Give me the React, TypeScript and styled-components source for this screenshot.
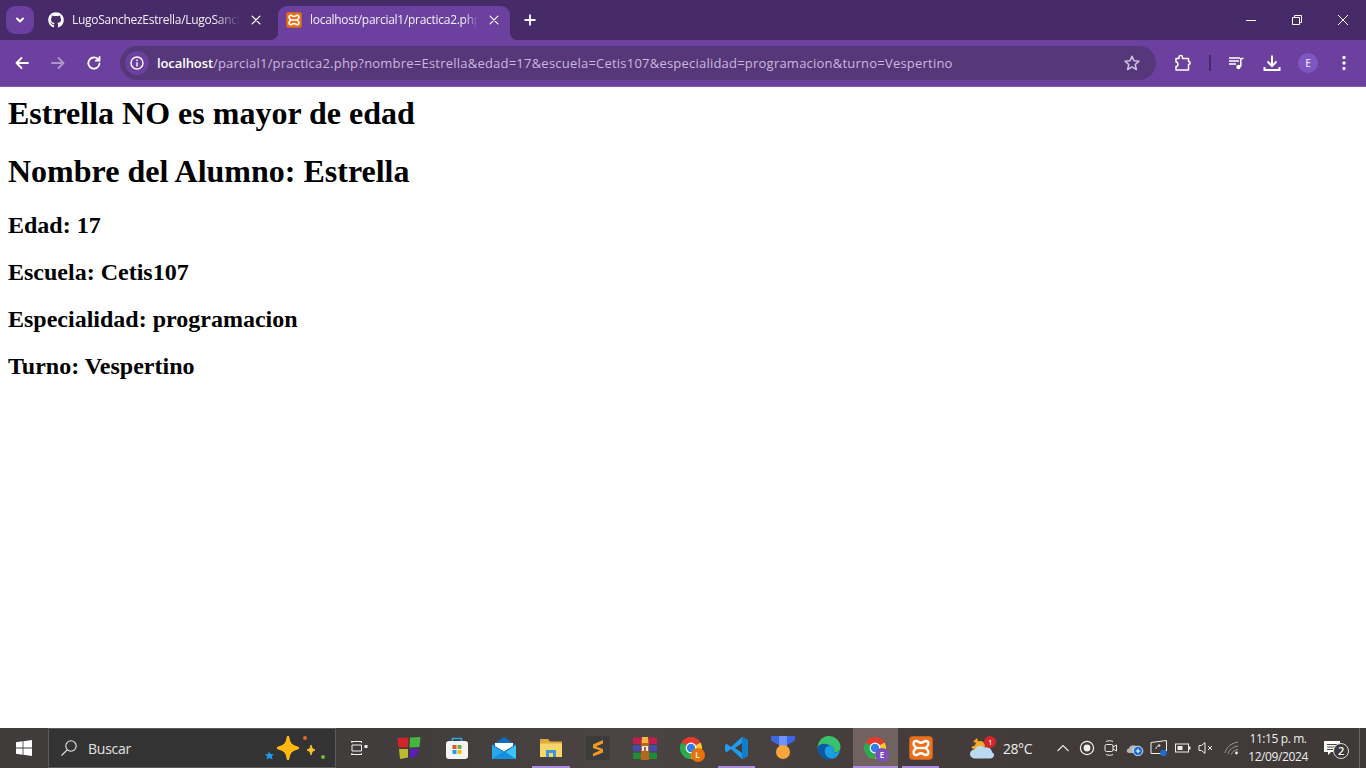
import React from "react";
import styled, { createGlobalStyle } from "styled-components";
import { FaGithub } from "react-icons/fa";

const Global = createGlobalStyle`
  html, body { margin: 0; padding: 0; height: 100%; background: #fff; overflow: hidden; }
  #root { height: 100%; }
`;

const Page = styled.div`
  width: 1366px; height: 768px; display: flex; flex-direction: column; overflow: hidden;
  font-family: "Open Sans", "Noto Sans", sans-serif;
`;

/* ---------- browser chrome ---------- */
const TabStrip = styled.div`
  height: 40px; flex: none; background: #462b68; display: flex; align-items: flex-end; color: #fff;
`;
const TabSearch = styled.button`
  width: 28px; height: 28px; margin: 0 6px 6px 6px; padding: 0; border: 0; border-radius: 9px;
  background: #6a3f9e; display: flex; align-items: center; justify-content: center;
`;
const Tab = styled.div<{ $active?: boolean }>`
  position: relative; height: 34px; display: flex; align-items: center; box-sizing: border-box;
  width: ${p => (p.$active ? 232 : 238)}px; padding: 0 ${p => (p.$active ? 8 : 14)}px 6px 8px;
  border-radius: 9px 9px 0 0; background: ${p => (p.$active ? "#6c409f" : "transparent")};
  ${p => p.$active && `
    &::before, &::after { content: ""; position: absolute; bottom: 0; width: 8px; height: 8px; }
    &::before { left: -8px; background: radial-gradient(circle at 0 0, transparent 8px, #6c409f 8.5px); }
    &::after { right: -8px; background: radial-gradient(circle at 100% 0, transparent 8px, #6c409f 8.5px); }
  `}
`;
const TabIcon = styled.span`
  width: 16px; height: 16px; flex: none; display: flex; margin-right: 8px; font-size: 16px;
`;
const TabTitle = styled.span<{ $fade: string }>`
  flex: 1; min-width: 0; font-size: 12px; line-height: 16px; white-space: nowrap; overflow: hidden; color: #f3eefa;
  letter-spacing: -0.28px;
  -webkit-mask-image: linear-gradient(to right, #000 ${p => p.$fade}, transparent 100%);
  mask-image: linear-gradient(to right, #000 ${p => p.$fade}, transparent 100%);
`;
const TabClose = styled.span`
  flex: none; width: 16px; height: 16px; margin-left: 8px; display: flex; align-items: center; justify-content: center;
`;
const NewTab = styled.span`
  width: 16px; height: 16px; margin: 0 0 12px 12px; display: flex;
`;
const Spacer = styled.div`flex: 1;`;
const WindowButton = styled.span`
  width: 46px; height: 40px; display: flex; align-items: center; justify-content: center;
`;

const Toolbar = styled.div`
  height: 47px; flex: none; box-sizing: border-box; background: #6c409f; border-bottom: 1px solid #8458b5;
  display: flex; align-items: center; padding: 0 0 1px 4px; color: #fff;
`;
const ToolButton = styled.span<{ $w?: number; $dim?: boolean }>`
  width: ${p => p.$w ?? 36}px; height: 34px; flex: none; display: flex; align-items: center; justify-content: center;
  opacity: ${p => (p.$dim ? 0.45 : 1)};
`;
const Omnibox = styled.div`
  width: 1036px; height: 34px; margin: 0 9px 0 8px; flex: none; border-radius: 17px; background: #56377a;
  display: flex; align-items: center; box-sizing: border-box; padding: 0 15px 0 5px;
`;
const InfoChip = styled.span`
  width: 24px; height: 24px; border-radius: 50%; background: #6c409f; flex: none; display: flex; align-items: center; justify-content: center;
  margin-right: 8px;
`;
const Url = styled.div`
  flex: 1; font-size: 13px; line-height: 18px; color: #c9b9dd; white-space: nowrap; letter-spacing: 0.22px;
`;
const UrlHost = styled.span`color: #fff; font-weight: 600; letter-spacing: -0.1px;`;
const Separator = styled.span`
  width: 2px; height: 16px; background: #462b68; flex: none; margin: 0 7px 0 8px;
`;
const Avatar = styled.span`
  width: 20px; height: 20px; border-radius: 50%; background: #7e56c2; color: #e6dcf5; font-size: 10px; font-weight: 600;
  display: flex; align-items: center; justify-content: center;
`;

/* ---------- document ---------- */
const Content = styled.main`
  flex: 1; min-height: 0; background: #fff; color: #000; padding: 8px; font-family: "Liberation Serif", "Times New Roman", serif;
`;
const Title = styled.h1`
  font-size: 32px; font-weight: 700; margin: 0 0 21.44px;
`;
const Detail = styled.h2`
  font-size: 24px; font-weight: 700; margin: 19.92px 0;
`;

/* ---------- taskbar ---------- */
const Taskbar = styled.footer`
  height: 40px; flex: none; display: flex; align-items: stretch; color: #fff;
  background: linear-gradient(90deg, #403c3c 0%, #403d3c 30%, #4a4442 45%, #453d3b 65%, #423a38 80%, #3e3a38 100%);
`;
const StartButton = styled.span`
  width: 48px; flex: none; display: flex; align-items: center; justify-content: center;
`;
const SearchBox = styled.div`
  width: 288px; flex: none; box-sizing: border-box; background: #333333; border: 1px solid #5d5a59;
  display: flex; align-items: center; padding: 0 8px 0 11px; font-size: 14px; color: #e4e4e4;
`;
const SearchText = styled.span`
  flex: 1; margin-left: 10px; font-size: 14px; letter-spacing: -0.25px;
`;
const TaskView = styled.span`
  width: 48px; flex: none; display: flex; align-items: center; justify-content: center;
`;
const TaskItem = styled.span<{ $ml: number; $bar: number; $on?: boolean }>`
  position: relative; width: 45px; flex: none; margin-left: ${p => p.$ml}px; display: flex; align-items: center; justify-content: center;
  background: ${p => (p.$on ? "#6f625f" : "transparent")};
  ${p => p.$bar > 0 && `
    &::after { content: ""; position: absolute; left: 50%; bottom: 0; width: ${p.$bar}px; height: 2px; margin-left: -${p.$bar / 2}px; background: #ab8ae0; }
  `}
`;
const IconWrap = styled.span<{ $w?: number }>`
  position: relative; display: flex; width: ${p => p.$w ?? 24}px; height: 24px;
`;
const Badge = styled.span<{ $bg: string }>`
  position: absolute; right: -2px; bottom: -2px; width: 14px; height: 14px; border-radius: 50%; background: ${p => p.$bg};
  color: #fff; font-size: 8px; line-height: 14px; text-align: center; font-weight: 600;
`;
const WeatherBadge = styled.span`
  position: absolute; right: 0; top: 0; width: 12px; height: 12px; border-radius: 50%; background: #d5262c;
  color: #fff; font-size: 8px; line-height: 12px; text-align: center;
`;
const Weather = styled.div`
  margin-left: 27px; flex: none; display: flex; align-items: center; font-size: 14px; color: #eee; letter-spacing: -0.45px;
`;
const WeatherText = styled.span`margin-left: 7px;`;
const Tray = styled.div`
  margin-left: 19px; flex: none; display: flex; align-items: center;
`;
const TrayItem = styled.span<{ $w?: number }>`
  width: ${p => p.$w ?? 24}px; flex: none; display: flex; align-items: center; justify-content: center;
`;
const Clock = styled.div`
  width: 62px; flex: none; display: flex; flex-direction: column; align-items: center; justify-content: center;
  font-size: 12px; line-height: 18px; color: #eee; letter-spacing: -0.4px;
`;
const Notify = styled.span`
  position: relative; width: 46px; flex: none; display: flex; align-items: center; justify-content: center;
`;
const NotifyCount = styled.span`
  position: absolute; left: 24px; top: 15px; width: 16px; height: 16px; box-sizing: border-box; border-radius: 50%; background: #3a3a3a;
  border: 1px solid #ddd; color: #fff; font-size: 11px; line-height: 14px; text-align: center; font-weight: 600;
`;
const ShowDesktop = styled.span`
  width: 1px; margin-left: 4px; background: #6b6663; flex: none;
`;

/* ---------- drawings ---------- */
const Xampp = ({ size }: { size: number }) => (
  <svg width={size} height={size} viewBox="0 0 24 24">
    <rect x="0.5" y="0.5" width="23" height="23" rx="3" fill="#e8701f" stroke="#c75f1c" />
    <path d="M7.2 5C9 5 10 6.8 12 6.8S15 5 16.8 5C19.8 5 20.2 8.4 18.4 10.2 17.8 10.9 17.2 11.3 17.2 12S17.8 13.1 18.4 13.8C20.2 15.6 19.8 19 16.8 19 15 19 14 17.2 12 17.2S9 19 7.2 19C4.2 19 3.8 15.6 5.6 13.8 6.2 13.1 6.8 12.7 6.8 12S6.2 10.9 5.6 10.2C3.8 8.4 4.2 5 7.2 5Z" fill="none" stroke="#fff" strokeWidth="2.4" />
    <path d="M7.5 12H16.5" stroke="#fff" strokeWidth="2.4" />
  </svg>
);
const Chrome = () => (
  <svg width="24" height="24" viewBox="0 0 24 24">
    <path d="M12 12L2.47 6.5A11 11 0 0 1 21.53 6.5Z" fill="#e33b2e" />
    <path d="M12 12L21.53 6.5A11 11 0 0 1 12 23Z" fill="#fbc52d" />
    <path d="M12 12L12 23A11 11 0 0 1 2.47 6.5Z" fill="#2da94f" />
    <circle cx="12" cy="12" r="5.4" fill="#fff" />
    <circle cx="12" cy="12" r="4.2" fill="#2f7fe8" />
  </svg>
);
const Stroke = ({ w = 18, children, sw = 1.8 }: { w?: number; children: React.ReactNode; sw?: number }) => (
  <svg width={w} height={w} viewBox="0 0 18 18" fill="none" stroke="currentColor" strokeWidth={sw} strokeLinecap="round" strokeLinejoin="round">
    {children}
  </svg>
);

const url = "/parcial1/practica2.php?nombre=Estrella&edad=17&escuela=Cetis107&especialidad=programacion&turno=Vespertino";

export default function App() {
  return (
    <Page>
      <Global />
      <TabStrip>
        <TabSearch>
          <svg width="12" height="12" viewBox="0 0 12 12" fill="none" stroke="#fff" strokeWidth="2" strokeLinecap="round" strokeLinejoin="round"><path d="M3 4.5L6 7.5L9 4.5" /></svg>
        </TabSearch>
        <Tab>
          <TabIcon><FaGithub color="#fff" size={16} /></TabIcon>
          <TabTitle $fade="85%">LugoSanchezEstrella/LugoSanchezEstrella</TabTitle>
          <TabClose><Stroke w={14} sw={1.6}><path d="M4 4L14 14M14 4L4 14" /></Stroke></TabClose>
        </Tab>
        <Tab $active>
          <TabIcon><Xampp size={16} /></TabIcon>
          <TabTitle $fade="92%">localhost/parcial1/practica2.php?nombre=Estrella</TabTitle>
          <TabClose><Stroke w={14} sw={1.6}><path d="M4 4L14 14M14 4L4 14" /></Stroke></TabClose>
        </Tab>
        <NewTab>
          <svg width="16" height="16" viewBox="0 0 16 16" stroke="#fff" strokeWidth="1.8"><path d="M8 2.5V13.5M2.5 8H13.5" /></svg>
        </NewTab>
        <Spacer />
        <WindowButton><svg width="12" height="12" viewBox="0 0 12 12" stroke="#fff"><path d="M1 6.5H11" /></svg></WindowButton>
        <WindowButton><svg width="12" height="12" viewBox="0 0 12 12" fill="none" stroke="#fff"><path d="M1.5 3.5H8.5V10.5H1.5ZM3.5 3.5V1.5H10.5V8.5H8.5" /></svg></WindowButton>
        <WindowButton><svg width="12" height="12" viewBox="0 0 12 12" stroke="#fff"><path d="M1 1L11 11M11 1L1 11" /></svg></WindowButton>
      </TabStrip>

      <Toolbar>
        <ToolButton><Stroke><path d="M15 9H3.5M8.5 4L3.5 9L8.5 14" /></Stroke></ToolButton>
        <ToolButton $dim><Stroke><path d="M3 9H14.5M9.5 4L14.5 9L9.5 14" /></Stroke></ToolButton>
        <ToolButton><Stroke><path d="M14.5 9.5A5.6 5.6 0 1 1 12.8 5L14.5 6.7M14.5 3V6.7H10.8" /></Stroke></ToolButton>
        <Omnibox>
          <InfoChip>
            <svg width="16" height="16" viewBox="0 0 16 16" fill="none" stroke="#fff" strokeWidth="1.4"><circle cx="8" cy="8" r="6" /><path d="M8 7.2V11.5M8 4.5V6" /></svg>
          </InfoChip>
          <Url><UrlHost>localhost</UrlHost>{url}</Url>
          <svg width="18" height="18" viewBox="0 0 18 18" fill="none" stroke="#cfc3de" strokeWidth="1.5" strokeLinejoin="round"><path d="M9 2.2L11 6.8L16 7.3L12.2 10.6L13.4 15.5L9 12.9L4.6 15.5L5.8 10.6L2 7.3L7 6.8Z" /></svg>
        </Omnibox>
        <ToolButton>
          <svg width="18" height="18" viewBox="0 0 18 18" fill="none" stroke="#fff" strokeWidth="1.5" strokeLinejoin="round"><path d="M2 4.5H5V3.2C5 1 8.5 1 8.5 3.2V4.5H14.5V7.5C16.6 7.5 16.6 10.5 14.5 10.5V16H2V12.5C4.6 12.5 4.6 8 2 8Z" /></svg>
        </ToolButton>
        <Separator />
        <ToolButton>
          <svg width="18" height="18" viewBox="0 0 18 18" fill="none" stroke="#fff" strokeWidth="1.5"><path d="M2 4H13M2 7H12M2 10H9" /><path d="M14 4.5H16.5M13.8 4V12.5" strokeWidth="1.6" /><circle cx="11.5" cy="13" r="2.2" fill="#fff" stroke="none" /></svg>
        </ToolButton>
        <ToolButton>
          <svg width="20" height="20" viewBox="0 0 20 20" fill="none" stroke="#fff" strokeWidth="2"><path d="M10 2.5V12.5M5.5 8.5L10 13L14.5 8.5M2.5 14V17H17.5V14" /></svg>
        </ToolButton>
        <ToolButton><Avatar>E</Avatar></ToolButton>
        <ToolButton>
          <svg width="18" height="18" viewBox="0 0 18 18" fill="#fff"><circle cx="9" cy="3.5" r="1.7" /><circle cx="9" cy="9" r="1.7" /><circle cx="9" cy="14.5" r="1.7" /></svg>
        </ToolButton>
      </Toolbar>

      <Content>
        <Title>Estrella NO es mayor de edad</Title>
        <Title>Nombre del Alumno: Estrella</Title>
        <Detail>Edad: 17</Detail>
        <Detail>Escuela: Cetis107</Detail>
        <Detail>Especialidad: programacion</Detail>
        <Detail>Turno: Vespertino</Detail>
      </Content>

      <Taskbar>
        <StartButton>
          <svg width="16" height="16" viewBox="0 0 16 16" fill="#fff"><path d="M0 2.3L6.6 1.3V7.6H0ZM7.4 1.2L16 0V7.6H7.4ZM0 8.4H6.6V14.7L0 13.7ZM7.4 8.4H16V16L7.4 14.8Z" /></svg>
        </StartButton>
        <SearchBox>
          <svg width="18" height="18" viewBox="0 0 18 18" fill="none" stroke="#e8e8e8" strokeWidth="1.1"><circle cx="11" cy="7" r="5.2" /><path d="M7.2 10.8L1.5 16.5" /></svg>
          <SearchText>Buscar</SearchText>
          <svg width="64" height="30" viewBox="0 0 64 30">
            <path d="M25 4C26 11 28 13 35 15C28 17 26 19 25 26C24 19 22 17 15 15C22 13 24 11 25 4Z" fill="#fdb813" stroke="#fdb813" strokeWidth="2.4" strokeLinejoin="round" />
            <path d="M48 12C48.5 15 49.5 16 52 17C49.5 18 48.5 19 48 22C47.5 19 46.5 18 44 17C46.5 16 47.5 15 48 12Z" fill="#fbc02d" stroke="#fbc02d" strokeLinejoin="round" />
            <circle cx="42" cy="5" r="2" fill="#e8622b" />
            <circle cx="60" cy="24" r="2" fill="#7cb82f" />
            <path d="M6 18.5L7.5 21L10.5 21L8.8 23.5L9.5 26.5L6.5 25L3.5 26.5L4.2 23.5L2 21.5L5 21Z" fill="#1e9bea" />
          </svg>
        </SearchBox>
        <TaskView>
          <svg width="18" height="16" viewBox="0 0 18 16" fill="none" stroke="#f0f0f0" strokeWidth="1"><path d="M0 1.5H11M0 14.5H11M1 5H10.5V11H1ZM1 1.5V3M10.5 1.5V3M1 14.5V13M10.5 14.5V13" /><rect x="13.5" y="5" width="3" height="3" fill="#f0f0f0" stroke="none" /></svg>
        </TaskView>
        <TaskItem $ml={2} $bar={0}>
          <svg width="24" height="24" viewBox="0 0 24 24"><path d="M0.5 2L11.5 1.5L11 11.5L1.5 11.5Z" fill="#d0262a" /><path d="M13 1.5L23.5 1L22.5 11L12.5 11.5Z" fill="#46b53e" /><path d="M2 13L11 13L11 21.5L3 23Z" fill="#bcbc2c" /><path d="M13 13L21.5 12.5L20 20L12.5 22Z" fill="#5a1fb4" /></svg>
        </TaskItem>
        <TaskItem $ml={3} $bar={0}>
          <svg width="24" height="24" viewBox="0 0 24 24"><path d="M7.5 6V2.5H16.5V6" fill="none" stroke="#2aa8e0" strokeWidth="1.6" /><rect x="1" y="5" width="22" height="18" rx="3" fill="#f4f4f4" /><rect x="7.5" y="9" width="4" height="4" fill="#e8512a" /><rect x="12.5" y="9" width="4" height="4" fill="#6db33f" /><rect x="7.5" y="14" width="4" height="4" fill="#1e9bea" /><rect x="12.5" y="14" width="4" height="4" fill="#fcb813" /></svg>
        </TaskItem>
        <TaskItem $ml={2} $bar={0}>
          <svg width="24" height="24" viewBox="0 0 24 24"><path d="M0 9L12 1L24 9V23H0Z" fill="#0f6cbd" /><path d="M0 9L12 17L24 9V23H0Z" fill="#3cc4f4" /><path d="M0 23L0 9L12 17Z" fill="#28a8ea" /><path d="M0 23L12 15L24 23Z" fill="#1490df" /><path d="M3 7H21V10L12 15.5L3 10Z" fill="#fff" /></svg>
        </TaskItem>
        <TaskItem $ml={2} $bar={38}>
          <svg width="24" height="24" viewBox="0 0 24 24"><path d="M1 3H9L11 5.5H23V21H1Z" fill="#e2a93a" /><path d="M1 7.5H23V21H1Z" fill="#f6d56b" /><path d="M7 21V14H17V21H14V17H10V21Z" fill="#3d97d8" /></svg>
        </TaskItem>
        <TaskItem $ml={2} $bar={0}>
          <svg width="24" height="24" viewBox="0 0 24 24"><rect width="24" height="24" rx="2" fill="#3c3c3c" /><path d="M17 4L7 8.5V12L14 14.5L7 17.5V20.5L17 16.5V13L10 10.5L17 7.5Z" fill="#f29a1f" /></svg>
        </TaskItem>
        <TaskItem $ml={2} $bar={0}>
          <svg width="24" height="24" viewBox="0 0 24 24"><rect x="0" y="1.5" width="24" height="6.5" rx="1" fill="#c21f4f" /><rect x="0" y="9" width="24" height="6.5" rx="1" fill="#4a4aa8" /><rect x="0" y="16.5" width="24" height="6.5" rx="1" fill="#1f8a3a" /><rect x="8" y="4" width="8" height="20" fill="#b5651d" /><rect x="9" y="1" width="6" height="6" fill="#f6b83c" /><rect x="9" y="10" width="6" height="5" fill="#f3ecd8" /><rect x="11.3" y="11" width="1.4" height="4" fill="#6b3a12" /></svg>
        </TaskItem>
        <TaskItem $ml={1} $bar={0}>
          <IconWrap><Chrome /><Badge $bg="#e8710a">L</Badge></IconWrap>
        </TaskItem>
        <TaskItem $ml={1} $bar={37}>
          <svg width="24" height="24" viewBox="0 0 24 24"><path d="M17 1L23 4V20L17 23L6 13L2 16L0 15V9L2 8L6 11Z" fill="#1f9cf0" /><path d="M17 7L10 12L17 17Z" fill="#433c3a" /><path d="M17 1L23 4V20L17 23V17L17 7Z" fill="#0f7ec8" /></svg>
        </TaskItem>
        <TaskItem $ml={1} $bar={0}>
          <svg width="24" height="24" viewBox="0 0 24 24"><path d="M0 0H8V9L4 7L0 4.5Z" fill="#3f66e0" /><path d="M8 0H16V11L12 13L8 11Z" fill="#6d94f5" /><path d="M16 0H24V4.5L20 7L16 9Z" fill="#3f66e0" /><circle cx="12" cy="16" r="7" fill="#f9a53b" /></svg>
        </TaskItem>
        <TaskItem $ml={1} $bar={0}>
          <svg width="24" height="24" viewBox="0 0 24 24"><path d="M0.5 12A11.5 11.5 0 0 1 23.5 11C23.5 15 20 17 16.5 16C18 14 17.5 10.5 13 9.5C7 8.5 2 11 0.5 12Z" fill="#39c16c" /><path d="M0.5 12C2 7 9 7 13 9.5C9 10 7 13 8 17C9 21 14 24 18 22A11.5 11.5 0 0 1 0.5 12Z" fill="#0c59a4" /><path d="M8 17C7 13 9 10 13 9.5C17 10 18 14 16.5 16C19 17 22 16 23.3 13.5C22.5 18 20 21 18 22C14 24 9 21 8 17Z" fill="#1b9de2" /></svg>
        </TaskItem>
        <TaskItem $ml={1.5} $bar={45} $on>
          <IconWrap><Chrome /><Badge $bg="#7c4fc0">E</Badge></IconWrap>
        </TaskItem>
        <TaskItem $ml={0.5} $bar={37}>
          <Xampp size={24} />
        </TaskItem>
        <Weather>
          <IconWrap $w={26}>
            <svg width="26" height="24" viewBox="0 0 26 24"><circle cx="10" cy="10" r="5" fill="#f9a825" /><path d="M7 2L8.5 7L3 6ZM1 11L6 9L6 15Z" fill="#f9a825" /><path d="M6 22.5C2 22.5 0 20.5 0 18S2 13.5 5 13.5C6 9.5 12 8.5 14 11.5C18 10.5 22 12.5 22 16.5C25 16.5 25 22.5 20 22.5Z" fill="#bcd9f2" /></svg>
            <WeatherBadge>1</WeatherBadge>
          </IconWrap>
          <WeatherText>28°C</WeatherText>
        </Weather>
        <Tray>
          <TrayItem>
            <svg width="14" height="14" viewBox="0 0 14 14" fill="none" stroke="#eee" strokeWidth="1.1"><path d="M1.5 10L7 4.5L12.5 10" /></svg>
          </TrayItem>
          <TrayItem>
            <svg width="16" height="16" viewBox="0 0 16 16" fill="none" stroke="#eee" strokeWidth="1.2"><circle cx="8" cy="8" r="6.6" /><circle cx="8" cy="8" r="3.4" fill="#eee" stroke="none" /></svg>
          </TrayItem>
          <TrayItem>
            <svg width="16" height="18" viewBox="0 0 16 18" fill="none" stroke="#eee" strokeWidth="1"><rect x="2" y="5.5" width="8" height="7" rx="1.5" /><path d="M10 8L13.5 6V12L10 10M3 2.5C5 1.5 8 1.5 10 2.5M3 15.5C5 16.5 8 16.5 10 15.5" /></svg>
          </TrayItem>
          <TrayItem>
            <svg width="18" height="16" viewBox="0 0 18 16"><path d="M3 13C0 13 0 8.5 3 8.5C3.5 5 9 4 10.5 7C13 6.5 14 8 14 10V13Z" fill="#b5b5b5" /><circle cx="12" cy="11" r="4.8" fill="#1c6fd0" stroke="#fff" strokeWidth="0.8" /><path d="M9.8 11H14.2M12 8.8V13.2" stroke="#fff" strokeWidth="1" /></svg>
          </TrayItem>
          <TrayItem>
            <svg width="18" height="18" viewBox="0 0 18 18" fill="none" stroke="#eee" strokeWidth="1"><path d="M1 3.5L16.5 1.5V12H12M12 14.5H1V3.5" /><path d="M6 10C6 7.5 8 6.5 10 6.5M10 6.5L8.5 5M10 6.5L8.5 8" /><circle cx="13.5" cy="14" r="3.2" fill="#1c6fd0" stroke="none" /></svg>
          </TrayItem>
          <TrayItem>
            <svg width="16" height="10" viewBox="0 0 16 10" fill="none" stroke="#eee" strokeWidth="1"><rect x="0.5" y="1" width="13" height="8" /><rect x="2.5" y="3" width="5" height="4" fill="#eee" stroke="none" /><rect x="14" y="3.5" width="1.5" height="3" fill="#eee" stroke="none" /></svg>
          </TrayItem>
          <TrayItem $w={22}>
            <svg width="16" height="14" viewBox="0 0 16 14" fill="none" stroke="#eee" strokeWidth="1"><path d="M1 4.5H3.5L7 1.5V12.5L3.5 9.5H1ZM10 5L14 9M14 5L10 9" /></svg>
          </TrayItem>
          <TrayItem $w={30}>
            <svg width="16" height="16" viewBox="0 0 16 16" fill="none" stroke="#9c9896" strokeWidth="1"><path d="M1 13C2 8 7 3 14 2M4 14C5 10 8 7 14 6M7.5 14.5C8 12 10 10 14 9.5" /><circle cx="12.5" cy="13" r="1.4" fill="#eee" stroke="none" /></svg>
          </TrayItem>
        </Tray>
        <Clock>
          <span>11:15 p. m.</span>
          <span>12/09/2024</span>
        </Clock>
        <Notify>
          <svg width="18" height="18" viewBox="0 0 18 18"><path d="M1 2H17V13H8L5 16V13H1Z" fill="#fff" /><path d="M4 5.5H14M4 8H14M4 10.5H10" stroke="#444" strokeWidth="1" /></svg>
          <NotifyCount>2</NotifyCount>
        </Notify>
        <ShowDesktop />
      </Taskbar>
    </Page>
  );
}
